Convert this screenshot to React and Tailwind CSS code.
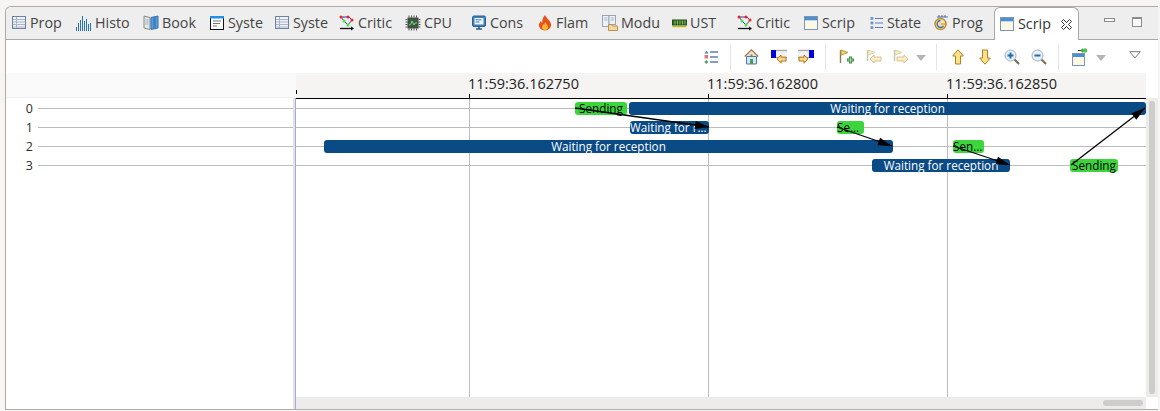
const TableIcon = () => (
  <svg width="16" height="16" viewBox="0 0 16 16">
    <rect x="1.500" y="1.500" width="13" height="12" fill="#eef1f6" stroke="#6f80a0" />
    <path d="M2 4.500h12M2 7h12M2 9.500h12M2 12h12M5.500 2v11" stroke="#a9b5c9" />
  </svg>
)

const HistoIcon = () => (
  <svg width="16" height="16" viewBox="0 0 16 16">
    <path d="M.5 16v-4M2.500 16V8M4.500 16V5M6.500 16V1M8.500 16V6M10.500 16V4M12.500 16V9M14.500 16V8" stroke="#2a74b4" />
  </svg>
)

const BookIcon = () => (
  <svg width="16" height="16" viewBox="0 0 16 16">
    <path d="M1 1l6 1.500v12L1 13z" fill="#dfe6ee" stroke="#8a8f78" />
    <path d="M8 2.500l7-1.500v12l-7 1.500z" fill="#5b9bd8" stroke="#3a74ad" />
    <path d="M10 2.500v12l1.500-1.500 1.500 1.500V2z" fill="#3f82c6" />
    <path d="M2.500 5h3M2.500 7h3M2.500 9h3" stroke="#9fb0c2" />
  </svg>
)

const ConsoleWinIcon = () => (
  <svg width="14" height="14" viewBox="0 0 14 14">
    <rect x="0.500" y="0.500" width="13" height="13" fill="#fff" stroke="#111" />
    <rect x="0" y="0" width="14" height="2.500" fill="#1e90e8" />
    <path d="M3 5h8M3 7.500h7M3 10h4" stroke="#777" />
  </svg>
)

const CriticIcon = () => (
  <svg width="16" height="16" viewBox="0 0 16 16">
    <path d="M2 2h8l3 3M5 6l4 4" stroke="#2438c8" fill="none" />
    <path d="M1 13.500h13" stroke="#111" strokeWidth="1.300" />
    <path d="M12 11.500l3 2-3 2z" fill="#111" />
    <path d="M2 2l3 4M13 5l-4 5" stroke="#555" fill="none" />
    <circle cx="2" cy="2" r="1.500" fill="#f0222a" />
    <circle cx="9" cy="2" r="1.500" fill="#f0222a" />
    <circle cx="13" cy="5" r="1.500" fill="#f0222a" />
    <circle cx="5" cy="6" r="1.500" fill="#43e043" />
    <circle cx="9" cy="10" r="1.500" fill="#43e043" />
  </svg>
)

const CpuIcon = () => (
  <svg width="16" height="16" viewBox="0 0 16 16">
    <rect x="3" y="3" width="10" height="10" fill="#3a5a40" stroke="#444" />
    <path d="M4 10l2-1 1-3 2 4 1-2h2" stroke="#7fd07f" fill="none" />
    <path d="M4 0.500v2M6.500 0.500v2M9 0.500v2M11.500 0.500v2M4 13.500v2M6.500 13.500v2M9 13.500v2M11.500 13.500v2M0.500 4.500h2M0.500 7h2M0.500 9.500h2M0.500 12h2M13.500 4.500h2M13.500 7h2M13.500 9.500h2M13.500 12h2" stroke="#555" />
  </svg>
)

const ConsIcon = () => (
  <svg width="14" height="16" viewBox="0 0 14 16">
    <rect x="0.500" y="1" width="13" height="10.500" rx="1.500" fill="#3f7fb8" stroke="#2a5f92" />
    <rect x="2.500" y="3" width="9" height="6.500" fill="#eef4fa" />
    <path d="M3.500 4.800h6M3.500 7h4" stroke="#3f7fb8" />
    <path d="M4 14h6M7 11.500V14" stroke="#2a5f92" strokeWidth="1.600" />
  </svg>
)

const FlameIcon = () => (
  <svg width="14" height="16" viewBox="0 0 14 16">
    <path d="M7 0c1 3 5 5 6 9 .6 3.500-2.500 6.500-6 6.500S.4 12.700 1 9.500C1.300 8 2.300 7 3 6c.2 1 .6 1.600 1.300 2C4 5 5 2 7 0z" fill="#e8501a" />
    <path d="M7 7c.6 1.500 3 2.500 3 5 0 1.800-1.400 3-3 3s-3-1.200-3-3c0-1.500 1-2 1.500-3 .3.600.6.800 1 1C6.300 9 6.500 8 7 7z" fill="#fbb833" />
  </svg>
)

const ModuIcon = () => (
  <svg width="16" height="16" viewBox="0 0 16 16">
    <rect x="0.500" y="0.500" width="6.500" height="11" fill="#eef1f5" stroke="#9aa5b3" />
    <rect x="7" y="0.500" width="6.500" height="9" fill="#eef1f5" stroke="#9aa5b3" />
    <path d="M2 3h3.500M2 5h3.500M8.500 3H12M8.500 5H12" stroke="#a7bad0" />
    <path d="M6.500 9.500h3l1 1.500h5v4.500h-9z" fill="#f7d79a" stroke="#b89050" />
  </svg>
)

const UstIcon = () => (
  <svg width="15" height="16" viewBox="0 0 15 16">
    <rect x="0.500" y="5" width="14" height="5" fill="#2f6b1f" stroke="#1f4f12" />
    <path d="M3 5.500v4M5.500 5.500v4M8 5.500v4M10.500 5.500v4M13 5.500v4" stroke="#86b36f" />
    <path d="M0.500 11.500h14" stroke="#c9b61a" strokeWidth="1.500" />
  </svg>
)

const ScriptIcon = () => (
  <svg width="14" height="14" viewBox="0 0 14 14">
    <rect x="0.500" y="0.500" width="13" height="13" fill="#fbf8e6" stroke="#7f93b2" />
    <rect x="1" y="1" width="12" height="3" fill="#4d90d0" />
    <path d="M1 4.500h12" stroke="#c5d5e8" />
  </svg>
)

const StateIcon = () => (
  <svg width="13" height="14" viewBox="0 0 13 14">
    <path d="M5 2.500h8M5 7h8M5 11.500h8" stroke="#5a7fb8" strokeWidth="1.200" />
    <rect x="0.500" y="1" width="2.800" height="2.800" fill="#6f95c9" />
    <rect x="0.500" y="5.600" width="2.800" height="2.800" fill="#6f95c9" />
    <rect x="0.500" y="10.200" width="2.800" height="2.800" fill="#6f95c9" />
  </svg>
)

const ProgIcon = () => (
  <svg width="15" height="16" viewBox="0 0 15 16">
    <path d="M5 2V0M8 2V0M11 2V0" stroke="#3b6ea8" />
    <path d="M3 2h11" stroke="#3b6ea8" />
    <circle cx="6.500" cy="9" r="5.500" fill="#f6e3b0" stroke="#c08a2e" strokeWidth="1.400" />
    <path d="M6.500 5.500a3.500 3.500 0 1 0 3 5.500" stroke="#3b6ea8" fill="none" strokeWidth="1.400" />
    <path d="M6.500 9h6" stroke="#c08a2e" />
  </svg>
)

const ListTool = () => (
  <svg width="14" height="14" viewBox="0 0 14 14">
    <path d="M2.500 0.500l2 3h-4z" fill="#4a7fc0" />
    <rect x="0.500" y="5" width="3.500" height="3.500" fill="#e5786a" />
    <path d="M2.300 10l2 2-2 2-2-2z" fill="#52a070" />
    <path d="M6 2h8M6 7h8M6 12h8" stroke="#5b7fae" strokeWidth="1.400" />
  </svg>
)

const HomeTool = () => (
  <svg width="15" height="16" viewBox="0 0 15 16">
    <path d="M0.700 7.500L7.500 0.800l6.800 6.700" fill="#efe3cf" stroke="#a5764a" strokeWidth="1.200" />
    <path d="M2.500 7.500h10V15h-10z" fill="#d2e6f6" stroke="#4f7ba6" />
    <rect x="6" y="10" width="3" height="5" fill="#4e9a5b" />
    <rect x="6.500" y="5.500" width="2" height="2" fill="#4e9a5b" />
  </svg>
)

const NavTool = ({ right }) => (
  <svg width="16" height="16" viewBox="0 0 16 16" className={right ? '-scale-x-100' : ''}>
    <rect x="0" y="1" width="5" height="8" fill="#0000e0" />
    <path d="M5 1.500h11M5 8.500h11" stroke="#a8a8a8" strokeWidth="1.500" />
    <path d="M5 4h11M5 6h11" stroke="#e4e4e4" />
    <path d="M6 10l4-4v2.200h5V12h-5v2.200z" fill="#fbd98a" stroke="#b07a1e" />
  </svg>
)

const FlagAddTool = () => (
  <svg width="16" height="16" viewBox="0 0 16 16">
    <path d="M1.500 1v13" stroke="#8a7a4a" strokeWidth="1.400" />
    <path d="M2 1l7 2.500L2 6z" fill="#efd876" stroke="#b59a3a" />
    <path d="M8 11h7M11.500 7.500v7" stroke="#3d8a45" strokeWidth="3" />
    <path d="M8.800 11h5.400M11.500 8.300v5.400" stroke="#a5dda0" />
  </svg>
)

const FlagNavTool = ({ right }) => (
  <svg width="16" height="16" viewBox="0 0 16 16">
    <g opacity="0.45">
      <path d="M1.500 1v11" stroke="#8a7a4a" strokeWidth="1.400" />
      <path d="M2 1l7 2.500L2 6z" fill="#efd876" stroke="#b59a3a" />
      <path d={right ? 'M15 10l-4-4v2H4v4h7v2z' : 'M4 10l4-4v2h7v4H8v2z'} fill="#fbd98a" stroke="#b07a1e" />
    </g>
  </svg>
)

const ArrowTool = ({ down }) => (
  <svg width="12" height="16" viewBox="0 0 12 16" className={down ? 'rotate-180' : ''}>
    <path d="M6 0.800L11.300 7H8.500v8h-5V7H0.700z" fill="#fce28a" stroke="#b8801c" />
  </svg>
)

const ZoomTool = ({ plus }) => (
  <svg width="16" height="16" viewBox="0 0 16 16">
    <path d="M10 10l5 5" stroke="#7a6a58" strokeWidth="2" />
    <circle cx="6.500" cy="6.500" r="5.500" fill="#e9eff5" stroke="#9db0c4" />
    <path d="M3.500 6.500h6" stroke="#1f6fb2" strokeWidth="2" />
    {plus && <path d="M6.500 3.500v6" stroke="#1f6fb2" strokeWidth="2" />}
  </svg>
)

const NewViewTool = () => (
  <svg width="16" height="18" viewBox="0 0 16 18">
    <rect x="0.500" y="5.500" width="12" height="12" fill="#fbf8e6" stroke="#7f93b2" />
    <rect x="1" y="6" width="11" height="3" fill="#4d90d0" />
    <path d="M6 2.500h5" stroke="#222" />
    <path d="M8 2.500l3-2.200v4.400z" fill="#3d9a3a" />
    <circle cx="13" cy="2.500" r="2.200" fill="#4cc24a" />
  </svg>
)

const Caret = () => <div className="w-0 h-0 border-x-[5px] border-x-transparent border-t-[6px] border-t-[#b5b5b5] mt-[3px]" />

const TABS = [
  { icon: <TableIcon />, label: 'Prop', w: 'w-[65px]' },
  { icon: <HistoIcon />, label: 'Histo', w: 'w-[67px]' },
  { icon: <BookIcon />, label: 'Book', w: 'w-[66px]' },
  { icon: <ConsoleWinIcon />, label: 'Syste', w: 'w-[65px]' },
  { icon: <TableIcon />, label: 'Syste', w: 'w-[65px]' },
  { icon: <CriticIcon />, label: 'Critic', w: 'w-[66px]' },
  { icon: <CpuIcon />, label: 'CPU', w: 'w-[66px]' },
  { icon: <ConsIcon />, label: 'Cons', w: 'w-[66px]' },
  { icon: <FlameIcon />, label: 'Flam', w: 'w-[65px]' },
  { icon: <ModuIcon />, label: 'Modu', w: 'w-[69px]' },
  { icon: <UstIcon />, label: 'UST', w: 'w-[66px]' },
  { icon: <CriticIcon />, label: 'Critic', w: 'w-[66px]' },
  { icon: <ScriptIcon />, label: 'Scrip', w: 'w-[65px]' },
  { icon: <StateIcon />, label: 'State', w: 'w-[65px]' },
  { icon: <ProgIcon />, label: 'Prog', w: 'w-[66px]' },
]

const ROWS = ['0', '1', '2', '3']

// gantt bars, positions relative to the chart canvas (x - 296, y - 99)
const BARS = [
  { cls: 'left-[279px] top-[3px] w-[52px] bg-[#3cd63c] text-black justify-center', text: 'Sending' },
  { cls: 'left-[333px] top-[3px] w-[517px] bg-[#0a4a85] text-white justify-center', text: 'Waiting for reception' },
  { cls: 'left-[334px] top-[22px] w-[79px] bg-[#0a4a85] text-white', text: 'Waiting for r…' },
  { cls: 'left-[541px] top-[22px] w-[27px] bg-[#3cd63c] text-black', text: 'Se…' },
  { cls: 'left-[28px] top-[41px] w-[569px] bg-[#0a4a85] text-white justify-center', text: 'Waiting for reception' },
  { cls: 'left-[657px] top-[41px] w-[31px] bg-[#3cd63c] text-black', text: 'Sen…' },
  { cls: 'left-[576px] top-[60px] w-[138px] bg-[#0a4a85] text-white justify-center', text: 'Waiting for reception' },
  { cls: 'left-[774px] top-[60px] w-[48px] bg-[#3cd63c] text-black justify-center', text: 'Sending' },
]

const ARROWS = [
  [279, 9, 413, 28],
  [541, 28, 596, 47],
  [657, 47, 714, 66],
  [775, 66, 849, 9],
]

function arrowHead(x1, y1, x2, y2) {
  const a = Math.atan2(y2 - y1, x2 - x1)
  const pt = (d, s) => `${x2 - d * Math.cos(a) - s * Math.sin(a)},${y2 - d * Math.sin(a) + s * Math.cos(a)}`
  return `${x2},${y2} ${pt(14, 4)} ${pt(14, -4)}`
}

export default function App() {
  return (
    <div className="w-[1160px] h-[411px] bg-[#f6f5f4] pt-[6px] pl-[5px] pr-[2px] pb-[1px] font-['Open_Sans',sans-serif] overflow-hidden">
      <div className="h-full flex flex-col bg-white border-t border-l border-b border-[#ababab] rounded-tl-[6px]">
        {/* tab bar */}
        <div className="relative h-[33px] shrink-0 bg-[#eeeeee] border-b border-[#a8a8a8] flex rounded-tl-[6px]">
          {TABS.map((tab, i) => (
            <div key={i} className={`${tab.w} shrink-0 flex items-center gap-[3px] pl-[5px] text-[14.300px] text-[#444444]`}>
              <span className="w-[16px] flex justify-center shrink-0">{tab.icon}</span>
              <span>{tab.label}</span>
            </div>
          ))}
          <div className="w-[85px] h-[33px] shrink-0 flex items-center gap-[3px] pl-[4px] bg-white border-x border-t border-[#a8a8a8] rounded-t-[6px] text-[14.300px] text-[#333333]">
            <span className="w-[16px] flex justify-center shrink-0"><ScriptIcon /></span>
            <span>Scrip</span>
            <svg width="11" height="11" viewBox="0 0 11 11" className="ml-[7px]">
              <path d="M.5 2.500l2-2 3 3 3-3 2 2-3 3 3 3-2 2-3-3-3 3-2-2 3-3z" fill="#fff" stroke="#333" />
            </svg>
          </div>
          <div className="w-[25px] shrink-0" />
          <div className="w-[11px] h-[4px] mt-[11px] bg-[#fafafa] border border-[#8c8c8c]" />
          <div className="w-[10px] h-[10px] mt-[10px] ml-[17px] bg-[#fafafa] border border-[#8c8c8c] border-t-2" />
        </div>

        {/* toolbar */}
        <div className="h-[33px] shrink-0 flex items-center pl-[691px]">
          <Tool><ListTool /></Tool>
          <Sep />
          <Tool><HomeTool /></Tool>
          <Tool><NavTool /></Tool>
          <Tool><NavTool right /></Tool>
          <Sep />
          <Tool><FlagAddTool /></Tool>
          <Tool><FlagNavTool /></Tool>
          <Tool><FlagNavTool right /></Tool>
          <div className="w-[14px] flex justify-center mr-[2px]"><Caret /></div>
          <Sep />
          <Tool><ArrowTool /></Tool>
          <Tool><ArrowTool down /></Tool>
          <Tool><ZoomTool plus /></Tool>
          <Tool><ZoomTool /></Tool>
          <Sep />
          <Tool><NewViewTool /></Tool>
          <div className="w-[14px] ml-[1px] flex justify-center"><Caret /></div>
          <div className="ml-[21px] w-[12px] h-[8px] mb-[3px]">
            <svg width="12" height="8" viewBox="0 0 12 8"><path d="M0.700 0.700h10.600L6 7z" fill="#fff" stroke="#777" /></svg>
          </div>
        </div>

        {/* chart area */}
        <div className="flex-1 flex min-h-0">
          <div className="w-[287px] shrink-0 flex flex-col">
            <div className="h-[25px] bg-[#fafafa] shrink-0 border-b border-[#f0f0f0]" />
            {ROWS.map(r => (
              <div key={r} className="h-[19px] flex items-center pt-[1px]">
                <span className="w-[27px] pt-[2px] text-right text-[12.500px] leading-none text-[#2e2e2e]">{r}</span>
                <div className="flex-1 h-px bg-[#bcbcbc] ml-[5px]" />
              </div>
            ))}
          </div>
          <div className="w-[3px] shrink-0 flex flex-col">
            <div className="h-[25px] bg-[#fafafa] shrink-0" />
            <div className="flex-1 bg-[#e2e2e2] border-r border-[#a6a6e6]" />
          </div>
          <div className="flex-1 flex flex-col min-w-0">
            <div className="flex flex-1 min-h-0">
              <div className="w-[850px] shrink-0 flex flex-col">
                {/* time axis */}
                <div className="relative h-[26px] shrink-0 bg-[#f5f4f3] border-b border-black">
                  <div className="absolute left-0 bottom-[4px] w-px h-[4px] bg-black" />
                  <div className="absolute left-[173px] bottom-0 w-px h-[4px] bg-black" />
                  <div className="absolute left-[412px] bottom-0 w-px h-[4px] bg-black" />
                  <div className="absolute left-[651px] bottom-0 w-px h-[4px] bg-black" />
                  <span className="absolute left-[172px] top-[1px] text-[14.500px] leading-[20px] text-[#222222]">11:59:36.162750</span>
                  <span className="absolute left-[411px] top-[1px] text-[14.500px] leading-[20px] text-[#222222]">11:59:36.162800</span>
                  <span className="absolute left-[650px] top-[1px] text-[14.500px] leading-[20px] text-[#222222]">11:59:36.162850</span>
                </div>
                {/* canvas */}
                <div className="relative flex-1">
                  <div className="absolute left-[173px] top-0 bottom-0 w-px bg-[#bcbcbc]" />
                  <div className="absolute left-[412px] top-0 bottom-0 w-px bg-[#bcbcbc]" />
                  <div className="absolute left-[651px] top-0 bottom-0 w-px bg-[#bcbcbc]" />
                  <div className="absolute left-0 right-0 top-[9px] h-px bg-[#bcbcbc]" />
                  <div className="absolute left-0 right-0 top-[28px] h-px bg-[#bcbcbc]" />
                  <div className="absolute left-0 right-0 top-[47px] h-px bg-[#bcbcbc]" />
                  <div className="absolute left-0 right-0 top-[66px] h-px bg-[#bcbcbc]" />
                  {BARS.map((b, i) => (
                    <div key={i} className={`absolute h-[13px] rounded-[3px] flex items-center whitespace-nowrap text-[11.700px] leading-none ${b.cls}`}>
                      {b.text}
                    </div>
                  ))}
                  <svg className="absolute inset-0" width="850" height="297">
                    {ARROWS.map(([x1, y1, x2, y2], i) => (
                      <g key={i}>
                        <line x1={x1} y1={y1} x2={x2} y2={y2} stroke="#000" strokeWidth="1.300" />
                        <polygon points={arrowHead(x1, y1, x2, y2)} fill="#000" />
                      </g>
                    ))}
                  </svg>
                </div>
              </div>
              {/* vertical scrollbar */}
              <div className="w-[12px] shrink-0 flex flex-col">
                <div className="h-[25px] shrink-0 bg-white" />
                <div className="flex-1 bg-[#edecea] pt-[3px] pb-[3px] px-[3px]">
                  <div className="h-full rounded-full bg-[#cdcdcd]" />
                </div>
              </div>
            </div>
            {/* horizontal scrollbar */}
            <div className="h-[12px] shrink-0 flex">
              <div className="w-[850px] bg-[#edecea] flex items-center justify-end pr-[3px]">
                <div className="w-[40px] h-[6px] rounded-full bg-[#cdcdcd]" />
              </div>
              <div className="w-[12px] bg-white" />
            </div>
          </div>
        </div>
      </div>
    </div>
  )
}

function Tool({ children }) {
  return <div className="w-[27px] h-[26px] shrink-0 flex items-center justify-center">{children}</div>
}

function Sep() {
  return <div className="w-px h-[26px] shrink-0 bg-[#e4e4e4] ml-[6px] mr-[7px]" />
}
